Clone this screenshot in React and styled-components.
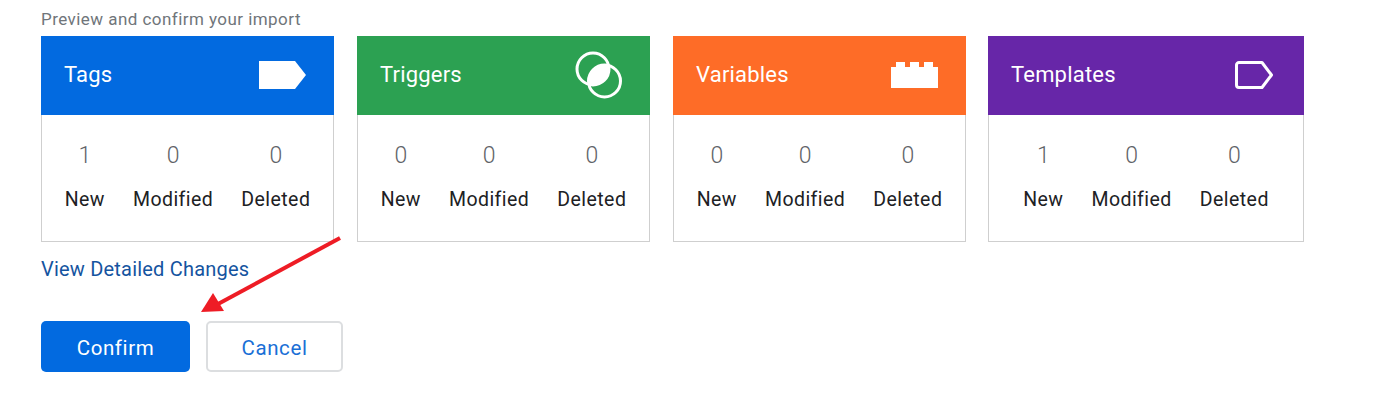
import React from "react";
import styled, { createGlobalStyle } from "styled-components";

const GlobalStyle = createGlobalStyle`
  html, body {
    margin: 0;
    background: #fff;
    font-family: Roboto, "Liberation Sans", sans-serif;
  }
`;

const cards = [
  { title: "Tags", color: "#026ae0", icon: "tag", stats: [1, 0, 0] },
  { title: "Triggers", color: "#2ca152", icon: "trigger", stats: [0, 0, 0] },
  { title: "Variables", color: "#fe6c27", icon: "variable", stats: [0, 0, 0] },
  { title: "Templates", color: "#6726a8", icon: "template", stats: [1, 0, 0], wide: true },
];

const labels = ["New", "Modified", "Deleted"];

const CardIcon = ({ type }) => {
  if (type === "tag") {
    return (
      <svg width="48" height="30" viewBox="0 0 48 30">
        <path d="M0 1h36l11 14-11 14H0z" fill="#fff" />
      </svg>
    );
  }
  if (type === "trigger") {
    return (
      <svg width="50" height="50" viewBox="0 0 50 50">
        <defs>
          <clipPath id="trigger-lens">
            <circle cx="20" cy="19" r="16" />
          </clipPath>
        </defs>
        <circle cx="20" cy="19" r="16" fill="none" stroke="#fff" strokeWidth="3" />
        <circle cx="31.500" cy="31" r="16" fill="none" stroke="#fff" strokeWidth="3" />
        <circle cx="31.500" cy="31" r="16" fill="#fff" clipPath="url(#trigger-lens)" />
      </svg>
    );
  }
  if (type === "variable") {
    return (
      <svg width="48" height="30" viewBox="0 0 48 30">
        <path d="M0 28V7h5V2h9v5h5V2h9v5h5V2h9v5h5v21z" fill="#fff" />
      </svg>
    );
  }
  return (
    <svg width="40" height="30" viewBox="0 0 40 30">
      <path
        d="M5 2.500h23L37.500 15 28 27.500H5A2.500 2.500 0 0 1 2.500 25V5A2.500 2.500 0 0 1 5 2.500z"
        fill="none"
        stroke="#fff"
        strokeWidth="3"
        strokeLinejoin="round"
      />
    </svg>
  );
};

const App = () => {
  return (
    <Page>
      <GlobalStyle />
      <Caption>Preview and confirm your import</Caption>
      <CardRow>
        {cards.map((card) => (
          <Card key={card.title} $wide={card.wide}>
            <CardHeader $color={card.color} $wide={card.wide}>
              <CardTitle>{card.title}</CardTitle>
              <CardIcon type={card.icon} />
            </CardHeader>
            <CardBody>
              {labels.map((label, i) => (
                <Stat key={label}>
                  <StatValue>{card.stats[i]}</StatValue>
                  <StatLabel>{label}</StatLabel>
                </Stat>
              ))}
            </CardBody>
          </Card>
        ))}
      </CardRow>
      <DetailLink>View Detailed Changes</DetailLink>
      <Actions>
        <ConfirmBtn>Confirm</ConfirmBtn>
        <CancelBtn>Cancel</CancelBtn>
      </Actions>
      <Arrow width="150" height="85" viewBox="0 0 150 85">
        <path d="M139 2 L17 68" stroke="#ee1c25" strokeWidth="4" fill="none" />
        <path d="M0 76 L12 57 L23 75 z" fill="#ee1c25" />
      </Arrow>
    </Page>
  );
};

const Page = styled.div`
  position: relative;
  width: 1376px;
  height: 407px;
  box-sizing: border-box;
  padding: 10px 0 0 41px;
  overflow: hidden;
`;

const Caption = styled.div`
  height: 26px;
  font-size: 17px;
  line-height: 19px;
  letter-spacing: 0.45px;
  color: #70757a;
`;

const CardRow = styled.div`
  display: flex;
  gap: 23px;
`;

const Card = styled.div`
  width: ${(props) => (props.$wide ? "316px" : "293px")};
  margin-left: ${(props) => (props.$wide ? "-1px" : "0")};
  height: 206px;
  box-sizing: border-box;
  display: flex;
  flex-direction: column;
`;

const CardHeader = styled.div`
  height: 79px;
  flex-shrink: 0;
  box-sizing: border-box;
  padding: 0 ${(props) => (props.$wide ? "30px" : "27px")} 2px 23px;
  display: flex;
  align-items: center;
  justify-content: space-between;
  background: ${(props) => props.$color};
`;

const CardTitle = styled.div`
  font-size: 22px;
  letter-spacing: 0.2px;
  color: #fff;
`;

const CardBody = styled.div`
  flex: 1;
  display: flex;
  justify-content: center;
  gap: 28px;
  padding-top: 29px;
  border: 1px solid #cfcfcf;
  border-top: none;
`;

const Stat = styled.div`
  display: flex;
  flex-direction: column;
  align-items: center;
  gap: 21px;
`;

const StatValue = styled.div`
  font-size: 23px;
  font-weight: 300;
  line-height: 24px;
  color: #5f6368;
`;

const StatLabel = styled.div`
  font-size: 19.500px;
  line-height: 22px;
  letter-spacing: 0.45px;
  color: #202124;
`;

const DetailLink = styled.a`
  display: block;
  margin-top: 15px;
  font-size: 20px;
  line-height: 24px;
  letter-spacing: 0.2px;
  color: #15549f;
`;

const Actions = styled.div`
  display: flex;
  gap: 16px;
  margin-top: 40px;
`;

const ConfirmBtn = styled.button`
  width: 149px;
  height: 51px;
  padding: 2px 0 0;
  border: none;
  border-radius: 5px;
  background: #026ae0;
  color: #fff;
  font-family: inherit;
  font-size: 20.500px;
  letter-spacing: 0.6px;
`;

const CancelBtn = styled.button`
  width: 137px;
  height: 51px;
  padding: 2px 0 0;
  border: 2px solid #dcdee0;
  border-radius: 5px;
  background: #fff;
  color: #1a6fd6;
  font-family: inherit;
  font-size: 20.500px;
  letter-spacing: 0.6px;
`;

const Arrow = styled.svg`
  position: absolute;
  left: 201px;
  top: 236px;
`;

export default App;
